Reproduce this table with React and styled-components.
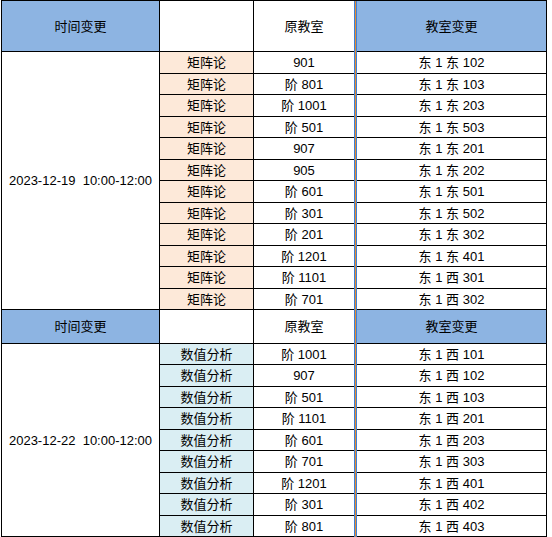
import React from "react";
import styled, { createGlobalStyle } from "styled-components";

const GlobalStyle = createGlobalStyle`
  html, body {
    margin: 0;
    padding: 0;
    background: #ffffff;
  }
  body {
    font-family: "Liberation Sans", "Noto Sans CJK SC", Arial, sans-serif;
    font-size: 13px;
    color: #000000;
  }
`;

const tones = {
  header: "#8db4e2",
  peach: "#fde9d9",
  aqua: "#daeef3",
  plain: "#ffffff",
};

const Sheet = styled.div`
  display: grid;
  grid-template-columns: 158px 94px 100px 3px 190px;
  grid-template-rows: ${(p) => p.$rows};
  width: max-content;
  margin-left: 1px;
  border-top: 1px solid #000;
  border-left: 1px solid #000;
`;

const Cell = styled.div`
  display: flex;
  align-items: center;
  justify-content: center;
  box-sizing: border-box;
  background: ${(p) => tones[p.$tone || "plain"]};
  border-bottom: 1px solid #000;
  border-right: ${(p) => (p.$open ? "none" : "1px solid #000")};
  grid-row: ${(p) => (p.$span ? `span ${p.$span}` : "auto")};
  white-space: pre;
  line-height: 1;
`;

const Divider = styled.div`
  grid-column: 4;
  grid-row: 1 / -1;
  background: linear-gradient(
    to right,
    #3d80d6 0 1px,
    #e88b2c 1px 2px,
    #3d80d6 2px 3px
  );
`;

const sections = [
  {
    time: "2023-12-19  10:00-12:00",
    course: "矩阵论",
    tone: "peach",
    rows: [
      ["901", "东 1 东 102"],
      ["阶 801", "东 1 东 103"],
      ["阶 1001", "东 1 东 203"],
      ["阶 501", "东 1 东 503"],
      ["907", "东 1 东 201"],
      ["905", "东 1 东 202"],
      ["阶 601", "东 1 东 501"],
      ["阶 301", "东 1 东 502"],
      ["阶 201", "东 1 东 302"],
      ["阶 1201", "东 1 东 401"],
      ["阶 1101", "东 1 西 301"],
      ["阶 701", "东 1 西 302"],
    ],
    header: 51,
    first: 22,
  },
  {
    time: "2023-12-22  10:00-12:00",
    course: "数值分析",
    tone: "aqua",
    rows: [
      ["阶 1001", "东 1 西 101"],
      ["907", "东 1 西 102"],
      ["阶 501", "东 1 西 103"],
      ["阶 1101", "东 1 西 201"],
      ["阶 601", "东 1 西 203"],
      ["阶 701", "东 1 西 303"],
      ["阶 1201", "东 1 西 401"],
      ["阶 301", "东 1 西 402"],
      ["阶 801", "东 1 西 403"],
    ],
    header: 34,
    first: 21,
  },
];

const trackList = sections
  .map((s) => {
    const other = s.first === 22 ? 21 : 22;
    const body = s.rows.map((_, i) => `${i % 2 ? other : s.first}px`);
    return [`${s.header}px`, ...body].join(" ");
  })
  .join(" ");

export default function App() {
  return (
    <>
      <GlobalStyle />
      <Sheet $rows={trackList}>
        <Divider />
        {sections.map((s, si) => (
          <React.Fragment key={si}>
            <Cell $tone="header">时间变更</Cell>
            <Cell />
            <Cell $open>原教室</Cell>
            <Cell $tone="header">教室变更</Cell>
            {s.rows.map(([from, to], i) => (
              <React.Fragment key={i}>
                {i === 0 && <Cell $span={s.rows.length}>{s.time}</Cell>}
                <Cell $tone={s.tone}>{s.course}</Cell>
                <Cell $open>{from}</Cell>
                <Cell>{to}</Cell>
              </React.Fragment>
            ))}
          </React.Fragment>
        ))}
      </Sheet>
    </>
  );
}
